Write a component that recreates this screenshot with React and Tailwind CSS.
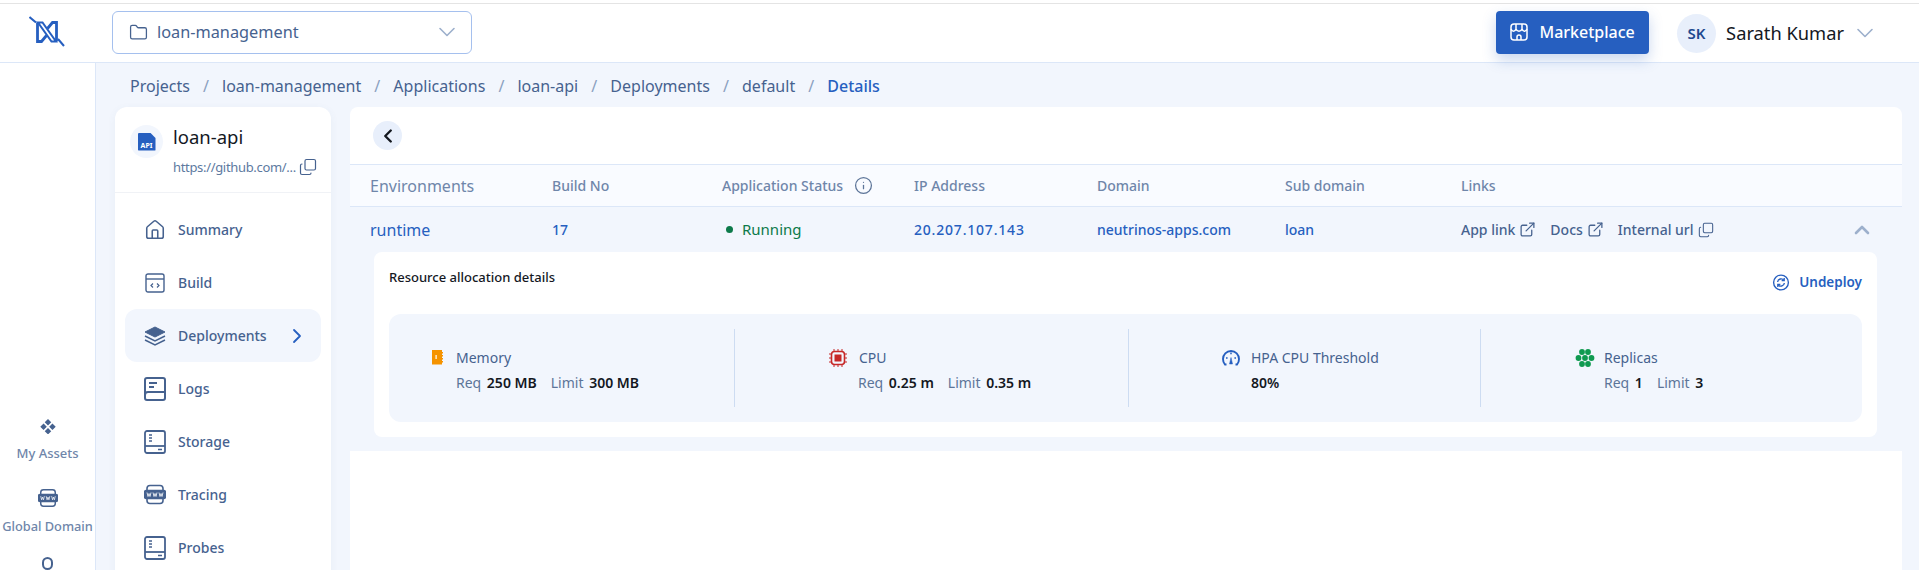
import React from "react";
import { ChevronDown, ChevronRight, ChevronLeft, ChevronUp, Folder, Copy, ExternalLink, Info, Home } from "lucide-react";

const navItems = [
  { label: "Summary", icon: "home" },
  { label: "Build", icon: "build" },
  { label: "Deployments", icon: "layers", active: true },
  { label: "Logs", icon: "logs" },
  { label: "Storage", icon: "storage" },
  { label: "Tracing", icon: "www" },
  { label: "Probes", icon: "storage" },
];

const crumbs = ["Projects", "loan-management", "Applications", "loan-api", "Deployments", "default"];

const Logo = () => (
  <svg width="36" height="32" viewBox="0 0 36 32" fill="none">
    <path d="M8.500 6.500v19h4l5-6M27.500 25.500v-19h-4l-5 6" stroke="#265fc0" strokeWidth="2.800" />
    <path d="M9 6.500h4.500l13.500 19h-4.500z" stroke="#265fc0" strokeWidth="2" />
    <path d="M0.500 1l6.500 5.500M29 23l6 7" stroke="#265fc0" strokeWidth="2" />
  </svg>
);

const WwwIcon = ({ size = 22 }) => (
  <svg width={size} height={size} viewBox="0 0 22 22" fill="none" stroke="#46628f" strokeWidth="1.6">
    <rect x="3" y="2" width="16" height="18" rx="3" />
    <rect x="0.5" y="7" width="21" height="8" rx="2" fill="#46628f" />
    <path d="M3 9l1 4 1-3 1 3 1-4M9 9l1 4 1-3 1 3 1-4M15 9l1 4 1-3 1 3 1-4" stroke="#fff" strokeWidth="0.8" />
  </svg>
);

const NavIcon = ({ type }) => {
  if (type === "home") return <Home size={22} color="#46628f" strokeWidth={1.7} />;
  if (type === "layers") {
    return (
      <svg width="22" height="20" viewBox="0 0 22 20" fill="#46628f" stroke="#46628f">
        <path d="M11 1l10 5-10 5L1 6z" />
        <path d="M1 10l10 5 10-5M1 14l10 5 10-5" fill="none" strokeWidth="1.5" />
      </svg>
    );
  }
  if (type === "build") {
    return (
      <svg width="20" height="20" viewBox="0 0 20 20" fill="none" stroke="#46628f" strokeWidth="1.4">
        <rect x="1" y="1" width="18" height="18" rx="2" />
        <path d="M1 6h18" />
        <path d="M8 10.5L6 12.5l2 2M12 10.5l2 2-2 2" strokeWidth="1.2" />
      </svg>
    );
  }
  if (type === "www") return <WwwIcon size={23} />;
  if (type === "logs") {
    return (
      <svg width="22" height="24" viewBox="0 0 22 24" fill="none" stroke="#46628f" strokeWidth="2">
        <rect x="1" y="1" width="20" height="22" rx="2" />
        <path d="M1 18c0-2 1-3 3-3h17" />
        <path d="M5 6h8M5 10h5" />
      </svg>
    );
  }
  return (
    <svg width="22" height="24" viewBox="0 0 22 24" fill="none" stroke="#46628f" strokeWidth="1.8">
      <rect x="1" y="1" width="20" height="22" rx="2" />
      <path d="M1 16h20" />
      <path d="M5 5h3M5 8h3M5 11h3M14 19.5h4" strokeWidth="1.5" />
    </svg>
  );
};

const MemoryIcon = () => (
  <svg width="12" height="15" viewBox="0 0 12 15" fill="#f59300">
    <path d="M1 0h10v2h1v1.500h-1v1.500h1v1.500h-1v1.500h1v1.500h-1v1.500h1v1.500h-1v2H1z" />
    <rect x="4.500" y="5" width="1.200" height="4" fill="#fff" />
  </svg>
);

const CpuIcon = () => (
  <svg width="18" height="18" viewBox="0 0 18 18" fill="none">
    <rect x="2.500" y="2.500" width="13" height="13" rx="3" stroke="#c62828" strokeWidth="1.600" />
    <rect x="5.500" y="5.500" width="7" height="7" fill="#c62828" />
    <path d="M5 0v2M9 0v2M13 0v2M5 16v2M9 16v2M13 16v2M0 5h2M0 9h2M0 13h2M16 5h2M16 9h2M16 13h2" stroke="#c62828" />
  </svg>
);

const GaugeIcon = () => (
  <svg width="18" height="18" viewBox="0 0 18 18" fill="none" stroke="#265fc0">
    <path d="M4.500 15.500H3C1.500 14 1 11.500 1 10c0-4.500 3.500-8 8-8s8 3.500 8 8c0 1.500-.5 4-2 5.500h-1.500" strokeWidth="1.900" />
    <path d="M9 8.500l1.500 6.500h-3z" fill="#265fc0" strokeWidth="0.500" />
    <path d="M9 3.500v1.800M4 9h1.600M12.400 9H14" strokeWidth="1.500" />
  </svg>
);

const ReplicasIcon = () => (
  <svg width="20" height="18" viewBox="0 0 20 18" fill="#0f9a50">
    <circle cx="7" cy="3" r="2.900" />
    <circle cx="13" cy="3" r="2.900" />
    <circle cx="3.500" cy="9" r="2.900" />
    <circle cx="10" cy="9" r="2.900" />
    <circle cx="16.500" cy="9" r="2.900" />
    <circle cx="7" cy="15" r="2.900" />
    <circle cx="13" cy="15" r="2.900" />
  </svg>
);

const UndeployIcon = () => (
  <svg width="18" height="19" viewBox="0 0 16 18" fill="none" stroke="#265fc0" strokeWidth="1.300">
    <circle cx="8" cy="9" r="7" />
    <path d="M4.800 8.500A3.300 3.300 0 0 1 10.800 7M11.200 9.500A3.300 3.300 0 0 1 5.200 11" />
    <path d="M11 4.800v2.400H8.600M5 13.200v-2.400h2.400" />
  </svg>
);

const Metric = ({ icon, title, className, children, gap }) => (
  <div className={`flex-none pt-[4px] ${className}`}>
    <div className={`flex items-center ${gap} text-[14px] text-[#46628f] h-[22px]`}>
      {icon}
      <span>{title}</span>
    </div>
    <div className="mt-[3px] text-[14px] text-[#5d7599] flex gap-[14px] h-[22px] items-center">{children}</div>
  </div>
);

const Val = ({ label, value }) => (
  <span>
    {label} <b className="ml-[2px] font-semibold text-[#14181f]">{value}</b>
  </span>
);

const Divider = () => <div className="w-px h-[78px] bg-[#cddcf2] flex-none" />;

export default function App() {
  return (
    <div className="h-screen overflow-hidden flex flex-col bg-[#f2f6fd] font-['Noto_Sans',sans-serif]">
      {/* top bar */}
      <header className="h-[63px] flex-none bg-white border-b border-[#dce7f8] pt-[3px]">
        <div className="h-full border-t border-[#e4e4e4] flex items-center pr-[40px]">
          <div className="w-[93px] flex justify-center flex-none mt-[-2px]">
            <Logo />
          </div>
          <div className="ml-[19px] w-[360px] h-[43px] mt-[-2px] rounded-md border border-[#a5c0ee] flex items-center pl-[16px] pr-[10px] text-[#46628f]">
            <Folder size={19} strokeWidth={1.6} />
            <span className="ml-[9px] text-[16.300px] pt-[1px] flex-1">loan-management</span>
            <ChevronDown size={28} color="#9db0cc" strokeWidth={1.4} />
          </div>
          <div className="ml-auto flex items-center">
            <button className="w-[153px] h-[43px] mt-[-2px] rounded bg-[#265fc0] text-white font-medium text-[16px] flex items-center justify-center gap-[11px] shadow-[0_6px_14px_rgba(38,95,192,0.25)]">
              <svg width="18" height="18" viewBox="0 0 18 18" fill="none" stroke="#fff" strokeWidth="1.500">
                <rect x="1" y="1" width="16" height="16" rx="3" />
                <path d="M1 6c1 3 4 3 5 0 1 3 5 3 6 0 1 3 4 3 5 0M6 1v5M12 1v5" />
                <path d="M7 17v-3a2 2 0 0 1 4 0v3" />
              </svg>
              Marketplace
            </button>
            <div className="ml-[28px] w-[39px] h-[39px] rounded-full bg-[#e8effb] text-[#1f4a8f] font-semibold text-[15px] flex items-center justify-center">
              SK
            </div>
            <span className="ml-[10px] text-[18.300px] text-[#14181f]">Sarath Kumar</span>
            <ChevronDown size={28} className="ml-[7px]" color="#9db0cc" strokeWidth={1.4} />
          </div>
        </div>
      </header>

      <div className="flex flex-1 min-h-0">
        {/* rail */}
        <aside className="w-[96px] flex-none bg-white border-r border-[#dce7f8] flex flex-col items-center pt-[356px] text-[#6f86aa] text-[13px] font-medium">
          <svg width="18" height="18" viewBox="0 0 18 18" fill="#46628f">
            <path d="M9 0l3.800 3.800L9 7.600 5.200 3.800zM3.800 5.200L7.600 9l-3.800 3.800L0 9zM14.200 5.200L18 9l-3.800 3.800L10.400 9zM9 10.400l3.800 3.800L9 18l-3.800-3.800z" />
          </svg>
          <span className="mt-[10px] leading-[18px]">My Assets</span>
          <div className="mt-[26px]">
            <WwwIcon size={20} />
          </div>
          <span className="mt-[9px] leading-[18px] text-[12.800px]">Global Domain</span>
          <div className="mt-[22px] w-[11px] h-[14px] rounded-full border-2 border-[#46628f]" />
        </aside>

        <div className="flex-1 min-w-0">
          {/* breadcrumb */}
          <nav className="h-[44px] pl-[34px] pt-[2px] flex items-center text-[16px] text-[#46628f]">
            {crumbs.map((c) => (
              <React.Fragment key={c}>
                <span>{c}</span>
                <span className="mx-[13.100px] text-[#8aa0c0]">/</span>
              </React.Fragment>
            ))}
            <span className="font-medium text-[#265fc0]">Details</span>
          </nav>

          <div className="flex pl-[19px]">
            {/* app card */}
            <div className="w-[216px] h-[480px] flex-none bg-white rounded-t-xl shadow-[0_2px_8px_rgba(70,98,143,0.06)]">
              <div className="h-[86px] border-b border-[#f0f2f6] pl-[15px] pt-[18px] flex">
                <div className="w-[33px] h-[33px] rounded-full bg-[#f2f6fd] flex items-center justify-center flex-none">
                  <div className="w-[18px] h-[18px] bg-[#265fc0] rounded-[1px] [clip-path:polygon(0_0,70%_0,100%_30%,100%_100%,0_100%)] text-white text-[7px] font-bold flex items-end justify-center pb-[2px] leading-none">
                    API
                  </div>
                </div>
                <div className="ml-[10px] min-w-0">
                  <div className="text-[18.500px] leading-[26px] mt-[-1px] text-[#14181f]">loan-api</div>
                  <div className="mt-[7px] flex items-center text-[13px] tracking-tight text-[#5d7a9f]">
                    <span className="leading-[20px]">https://github.com/...</span>
                    <Copy size={18} color="#46628f" strokeWidth={1.6} className="ml-[3px] -scale-x-100 rotate-180" />
                  </div>
                </div>
              </div>
              <div className="px-[10px] pt-[10px]">
                {navItems.map((item) => (
                  <div
                    key={item.label}
                    className={`h-[53px] rounded-xl flex items-center pl-[19px] pr-[12px] text-[14px] font-medium text-[#46628f] ${item.active ? "bg-[#f2f6fd]" : ""}`}
                  >
                    <div className="w-[22px] flex justify-center flex-none">
                      <NavIcon type={item.icon} />
                    </div>
                    <span className="ml-[12px] flex-1">{item.label}</span>
                    {item.active && <ChevronRight size={24} color="#265fc0" strokeWidth={1.8} />}
                  </div>
                ))}
              </div>
            </div>

            {/* details panel */}
            <main className="ml-[19px] w-[1552px] h-[480px] flex-none bg-white rounded-t-lg">
              <div className="h-[57px] pl-[23px] flex items-center">
                <div className="w-[29px] h-[29px] rounded-full bg-[#e8effb] flex items-center justify-center">
                  <ChevronLeft size={22} color="#14181f" strokeWidth={2.6} />
                </div>
              </div>
              <div className="h-[43px] bg-[#f9fbff] border-y border-[#dce7f8] flex items-center pl-[20px] text-[14px] font-medium text-[#6f86aa]">
                <span className="w-[182px] text-[16px] font-normal">Environments</span>
                <span className="w-[170px]">Build No</span>
                <span className="w-[192px] flex items-center gap-[11px]">
                  Application Status <Info size={19} color="#5d7599" strokeWidth={1.6} />
                </span>
                <span className="w-[183px]">IP Address</span>
                <span className="w-[188px]">Domain</span>
                <span className="w-[176px]">Sub domain</span>
                <span>Links</span>
              </div>
              <div className="bg-[#f2f6fd] h-[244px]">
                <div className="h-[45px] flex items-center pl-[20px] text-[14px] font-medium text-[#265fc0]">
                  <span className="w-[182px] text-[16px] font-normal">runtime</span>
                  <span className="w-[170px]">17</span>
                  <span className="w-[192px] pl-[4px] flex items-center text-[15px] font-normal text-[#0d7a4a]">
                    <span className="w-[7px] h-[7px] rounded-full bg-[#0d7a4a] mr-[9px]" />
                    Running
                  </span>
                  <span className="w-[183px] tracking-[0.8px]">20.207.107.143</span>
                  <span className="w-[188px]">neutrinos-apps.com</span>
                  <span className="w-[176px]">loan</span>
                  <span className="flex items-center text-[#46628f]">
                    App link
                    <ExternalLink size={17} strokeWidth={1.8} className="ml-[4px]" />
                    <span className="ml-[14px]">Docs</span>
                    <ExternalLink size={17} strokeWidth={1.8} className="ml-[4px]" />
                    <span className="ml-[14px]">Internal url</span>
                    <Copy size={16} strokeWidth={1.6} className="ml-[4px] -scale-x-100 rotate-180" />
                  </span>
                  <ChevronUp size={24} color="#9db0cc" strokeWidth={2.6} className="ml-auto mr-[28px]" />
                </div>
                <div className="ml-[24px] w-[1503px] h-[185px] bg-white rounded-lg px-[15px]">
                  <div className="h-[62px] flex items-center justify-between pb-[10px]">
                    <span className="text-[13px] font-medium text-[#14181f]">Resource allocation details</span>
                    <span className="flex items-center gap-[9px] text-[13.500px] font-semibold text-[#265fc0] pt-[8px]">
                      <UndeployIcon /> Undeploy
                    </span>
                  </div>
                  <div className="h-[108px] bg-[#f2f6fd] rounded-xl flex items-center">
                    <Metric className="w-[345px] pl-[42px]" gap="gap-[13px]" icon={<MemoryIcon />} title="Memory">
                      <span className="ml-[25px] flex gap-[14px]">
                        <Val label="Req" value="250 MB" />
                        <Val label="Limit" value="300 MB" />
                      </span>
                    </Metric>
                    <Divider />
                    <Metric className="w-[393px] pl-[94px]" gap="gap-[12px]" icon={<CpuIcon />} title="CPU">
                      <span className="ml-[29px] flex gap-[14px]">
                        <Val label="Req" value="0.25 m" />
                        <Val label="Limit" value="0.35 m" />
                      </span>
                    </Metric>
                    <Divider />
                    <Metric className="w-[351px] pl-[93px]" gap="gap-[11px]" icon={<GaugeIcon />} title="HPA CPU Threshold">
                      <b className="ml-[29px] font-semibold text-[#14181f]">80%</b>
                    </Metric>
                    <Divider />
                    <Metric className="w-[381px] pl-[94px]" gap="gap-[9px]" icon={<ReplicasIcon />} title="Replicas">
                      <span className="ml-[29px] flex gap-[14px]">
                        <Val label="Req" value="1" />
                        <Val label="Limit" value="3" />
                      </span>
                    </Metric>
                  </div>
                </div>
              </div>
            </main>
          </div>
        </div>
      </div>
    </div>
  );
}
